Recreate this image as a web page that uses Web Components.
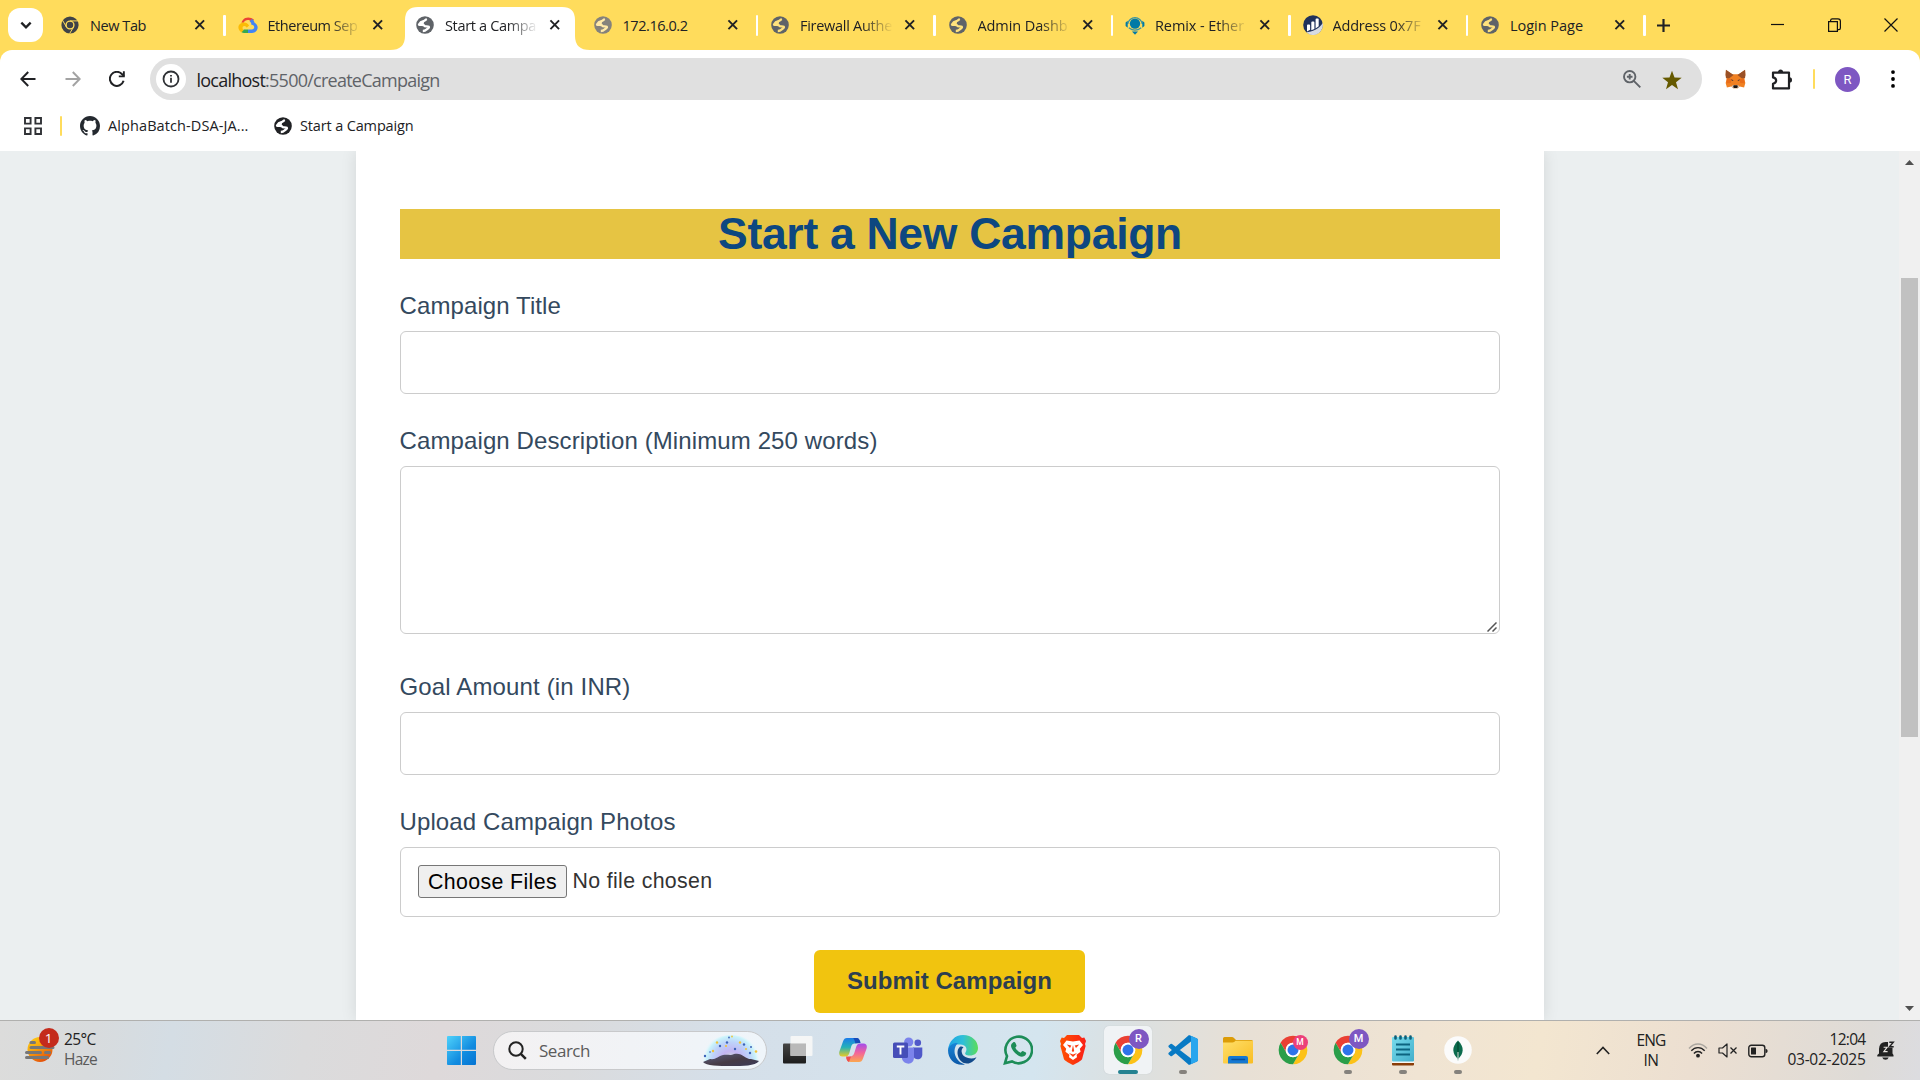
<!DOCTYPE html>
<html lang="en">
<head>
<meta charset="utf-8">
<title>Start a Campaign</title>
<style>
html,body{margin:0;width:1920px;height:1080px;overflow:hidden}
body{font-family:"Open Sans","Noto Sans",sans-serif;background:#fff}
</style>
</head>
<body>
<desktop-screen></desktop-screen>
<script>
const GLOBE = (c, l) => `<circle cx="9" cy="9" r="8.8" fill="${c}"/><path d="M10.800 3C9.600 3.600 9 5 7.400 5.200 5.200 5.600 4 6.600 3 8.600c1.600.6 4.200-.6 5.200 1 .8 1.500 3 .2 4.600 1.200.8 1.400-1.800 1.800-2.600 3-.8 1-2 1.200-3.400 1.200" fill="none" stroke="${l}" stroke-width="2.300" stroke-linejoin="round"/><path d="M3 8.600L7.400 5.200 8.200 7 6.400 9z" fill="${l}"/>`;
const CHROME = (r, y, g, b, w) => {
  const d = 'M4.950 13A22 22 0 0 1 43.050 13L24 13A11 11 0 0 0 14.470 29.500Z';
  return `<path d="${d}" fill="${r}"/><path d="${d}" fill="${y}" transform="rotate(120 24 24)"/><path d="${d}" fill="${g}" transform="rotate(240 24 24)"/><circle cx="24" cy="24" r="11.200" fill="${w}"/><circle cx="24" cy="24" r="8.400" fill="${b}"/>`;
};
const ICONS = {
  down: ['0 0 12 12', '<path d="M2 4L6 8l4-4" fill="none" stroke="#202124" stroke-width="2"/>'],
  chromeGray: ['1 1 46 46', `<circle cx="24" cy="24" r="22" fill="#3f4247"/><circle cx="24" cy="24" r="10" fill="none" stroke="#ffdc5c" stroke-width="3.500"/><path d="M24 13.500H44M15 29.500L5 12M33 29.500L23 46" stroke="#ffdc5c" stroke-width="2.500"/>`],
  cloud: ['0 0 20 17', '<path d="M14.300 4.700l1.700-1.700C12.700-.2 7.600-.3 4.900 3.100 4.200 4 3.700 5 3.500 6l2.300 0C6.500 3.500 11 1.800 13.400 5.300z" fill="#ea4335"/><path d="M16.600 6C16.100 4.300 15.200 3.100 14 2.200l-2.400 2.400c1.200.8 1.800 2.200 1.800 3.600 3.600-.1 3.800 5 .3 5.100H10V17h4c5.900-.3 7.900-7.800 2.600-11z" fill="#4285f4"/><path d="M6 17h4v-3.700H6L4 14.500 3.600 16.200C4.400 16.800 5.200 17 6 17z" fill="#34a853"/><path d="M6 5.900c-5.700 0-7.900 7-2.500 10.400l2.300-2.400C3.800 12.800 4.300 9.600 6.300 9.600c1.200 0 2 .8 2.400 1.800l2.400-2.400C9.900 7 8.200 5.900 6 5.900z" fill="#fbbc05"/>'],
  globe: ['0 0 18 18', GLOBE('#5f6368', '#fff')],
  globeTab: ['0 0 18 18', GLOBE('#5f6368', '#ffe27d')],
  globeDim: ['0 0 18 18', GLOBE('#85827c', '#ffe9a8')],
  globeDark: ['0 0 18 18', GLOBE('#202124', '#fff')],
  remix: ['0 0 20 20', '<circle cx="10" cy="8.600" r="5.200" fill="#007aa6"/><path d="M2.700 9A7.400 7.600 0 0 1 17.300 9" fill="none" stroke="#3c94a0" stroke-width="1.300"/><path d="M2.700 5.800L.6 7.500v3.600l2.100 1.600zM17.300 5.800l2.100 1.700v3.600l-2.100 1.600z" fill="#007aa6"/><path d="M3.800 12.800Q10 17.600 16.200 12.800" fill="none" stroke="#3c94a0" stroke-width="1.300"/><path d="M7 16.400h6L10 19.800z" fill="#007aa6"/>'],
  etherscan: ['0 0 20 20', '<circle cx="10" cy="10" r="9.800" fill="#21325b"/><path d="M19.900 8C16 14 9 17 3.500 17.300 7 21 13.500 21 17 17c2.500-2.500 3.200-6 2.900-9z" fill="#d7dbe2"/><path d="M4 10.500q0-.9.9-.9h1.300q.9 0 .9.900v4.300L4 16.500zM8.300 7.400q0-.9.900-.9h1.300q.9 0 .9.900v6.600l-3.100 1.300zM12.600 4.300q0-.9.900-.9h1.300q.9 0 .9.900v7l-3.100 2.200z" fill="#fff"/>'],
  close: ['0 0 12 12', '<path d="M1.500 1.500l9 9M10.500 1.500l-9 9" stroke="#202124" stroke-width="2"/>'],
  plus: ['0 0 12 12', '<path d="M6 0v12M0 6h12" stroke="#202124" stroke-width="2"/>'],
  minimize: ['0 0 13 13', '<path d="M0 5.500h13" stroke="#111" stroke-width="1.200"/>'],
  restore: ['0 0 14 14', '<path d="M1.600 3.600h8.800v9.800H1.600zM3.600 3.200V2.500a1.700 1.700 0 0 1 1.700-1.600H11a2.400 2.400 0 0 1 2.400 2.400v6.700a1.700 1.700 0 0 1-1.600 1.700h-1" fill="none" stroke="#111" stroke-width="1.200"/>'],
  winClose: ['0 0 14 14', '<path d="M.5.5l13 13M13.500.5L.5 13.500" stroke="#111" stroke-width="1.200"/>'],
  back: ['0 0 16 16', '<path d="M15.500 8H2M8.200 1L1.300 8l6.900 7" fill="none" stroke="#202124" stroke-width="2"/>'],
  forward: ['0 0 16 16', '<path d="M.5 8H14M7.800 1l6.900 7-6.900 7" fill="none" stroke="#a3a3a3" stroke-width="2"/>'],
  reload: ['0 0 16 16', '<path d="M14.600 9.800A7 7 0 1 1 13.200 3.300L15 5" fill="none" stroke="#202124" stroke-width="2"/><path d="M15.800.3v6h-6V4.400h4.100V.3z" fill="#202124"/>'],
  info: ['0 0 18 18', '<circle cx="9" cy="9" r="7.500" fill="none" stroke="#303236" stroke-width="1.800"/><path d="M9 7.800v5M9 4.900v1.700" stroke="#303236" stroke-width="1.800"/>'],
  zoom: ['0 0 18 18', '<circle cx="6.700" cy="6.700" r="5.700" fill="none" stroke="#5f6368" stroke-width="1.900"/><path d="M10.800 10.800l6.500 6.500M6.700 3.900v5.600M3.900 6.700h5.600" stroke="#5f6368" stroke-width="1.900"/>'],
  star: ['0 0 20 20', '<path d="M10 .8l2.500 6.700 7.200.3-5.700 4.400 2 7L10 15.100l-6 4.100 2-7L.300 7.800l7.200-.3z" fill="#665a00"/>'],
  fox: ['0 0 22 20', '<path d="M1 1l6.500 4.200h7L21 1l.3 5-1 4 1 4-1.300 4.500-4.500-1-2 1.800h-5l-2-1.800-4.500 1L.7 14l1-4-1-4z" fill="#f08022"/><path d="M1 .8l8 5.300L4.200 9.500 1 9 .6 6zM21 .8l-8 5.300 4.800 3.400 3.200-.5.400-3z" fill="#9a5026"/><path d="M2 9.500l5 .5-1 4-4.500.2zM20 9.500l-5 .5 1 4 4.500.2z" fill="#e96c18"/><path d="M6.500 10l2.600 1.500-1.800.6zM15.500 10l-2.600 1.500 1.800.6z" fill="#5b3c32"/><path d="M6.500 17.200L9 16h4l2.500 1.200-2.300 2.300H8.800z" fill="#d8c5b4"/><path d="M9 16.200h4l.4 2-1 .8H9.600l-1-.8z" fill="#1c1512"/>'],
  puzzle: ['0 0 21 21', '<path d="M2 3.600h16v15.800H2v-4.600c4.200-1 4.200-5.400 0-6.400z" fill="none" stroke="#202124" stroke-width="2.200" stroke-linejoin="round"/><path d="M6.900 3.200a2.600 2.600 0 0 1 5.200 0zM18.500 8.300a2.500 2.600 0 0 1 0 5.200z" fill="#202124"/>'],
  dots: ['0 0 4 18', '<circle cx="2" cy="2.100" r="1.900"/><circle cx="2" cy="9" r="1.900"/><circle cx="2" cy="15.900" r="1.900"/>'],
  apps: ['0 0 18 18', '<path d="M1 1h5.600v5.600H1zM11.400 1H17v5.600h-5.600zM1 11.400h5.600V17H1zM11.400 11.400H17V17h-5.600z" fill="none" stroke="#303236" stroke-width="1.900"/>'],
  github: ['0 0 16 16', '<path fill="#24292f" d="M8 0C3.580 0 0 3.580 0 8c0 3.540 2.290 6.530 5.470 7.590.4.070.55-.17.55-.38 0-.19-.01-.82-.01-1.490-2.010.37-2.530-.49-2.690-.94-.09-.23-.48-.94-.82-1.130-.28-.15-.68-.52-.01-.53.63-.01 1.080.58 1.230.82.720 1.210 1.870.87 2.330.66.070-.52.28-.87.51-1.070-1.780-.2-3.640-.89-3.640-3.950 0-.87.31-1.590.82-2.150-.08-.2-.36-1.020.08-2.120 0 0 .67-.21 2.200.82.640-.18 1.320-.27 2-.27s1.360.09 2 .27c1.530-1.040 2.200-.82 2.200-.82.440 1.100.16 1.920.08 2.120.51.56.82 1.270.82 2.150 0 3.070-1.870 3.750-3.650 3.950.29.25.54.73.54 1.480 0 1.070-.01 1.930-.01 2.200 0 .21.15.46.55.38A8.010 8.010 0 0 0 16 8c0-4.420-3.580-8-8-8z"/>'],
  haze: ['0 0 30 27', '<defs><linearGradient id="h" x1="0" y1="0" x2=".6" y2="1"><stop offset="0" stop-color="#fcd21b"/><stop offset=".45" stop-color="#f9a80c"/><stop offset="1" stop-color="#e4500a"/></linearGradient></defs><circle cx="15" cy="13.500" r="12.500" fill="url(#h)"/><path d="M6 6.500h3.500M6 11.500h22M1.500 16.500h14M20.500 16.500h4M1.500 21.500h21" stroke="#777" stroke-width="3" stroke-linecap="round"/>'],
  start: ['0 0 29 29', '<defs><linearGradient id="w" x1="0" y1="0" x2="1" y2="1"><stop offset="0" stop-color="#4fd2fb"/><stop offset=".6" stop-color="#128ce0"/><stop offset="1" stop-color="#0573d2"/></linearGradient></defs><path d="M0 1q0-1 1-1h12.800v13.800H0zM15 0h13q1 0 1 1v12.800H15zM0 15h13.800v14H1q-1 0-1-1zM15 15h14v13q0 1-1 1H15z" fill="url(#w)"/>'],
  search: ['0 0 19 19', '<circle cx="8" cy="8" r="6.700" fill="none" stroke="#222" stroke-width="2"/><path d="M12.800 12.800l5 5" stroke="#222" stroke-width="2.500"/>'],
  dome: ['0 0 60 32', '<defs><radialGradient id="d" gradientUnits="userSpaceOnUse" cx="30" cy="26" r="29"><stop offset="0" stop-color="#d4e9cf"/><stop offset=".35" stop-color="#c3b5f2"/><stop offset=".65" stop-color="#bdd3fa"/><stop offset=".85" stop-color="#c8f2fa"/><stop offset="1" stop-color="#eefaff" stop-opacity="0"/></radialGradient><linearGradient id="m" x1="0" y1="0" x2="1" y2="1"><stop offset="0" stop-color="#5d6283"/><stop offset=".55" stop-color="#463b45"/><stop offset="1" stop-color="#3b3a58"/></linearGradient></defs><path d="M1 28C1 10 14 0 30 0s29 10 29 28z" fill="url(#d)"/><path d="M2 27l7-3c6 1 8-3 13-4 5-1 7 1 11-1 8-2 11 5 17 5l8 2c-4 5-16 5-28 5S5 31 2 27z" fill="url(#m)"/><g fill="#3c62b8"><circle cx="4" cy="21" r="1.200"/><circle cx="19" cy="11" r="1.200"/><circle cx="26" cy="7.500" r="1.200"/><circle cx="34" cy="14" r="1.200"/><circle cx="43" cy="9.500" r="1.200"/><circle cx="49" cy="18" r="1.200"/><circle cx="50" cy="12" r="1"/><circle cx="28" cy="2.500" r=".9"/><circle cx="9" cy="17" r=".8"/></g><g fill="#f0c23a"><circle cx="12" cy="16" r="1.200"/><circle cx="16" cy="7.500" r="1.200"/><circle cx="25" cy="11" r="1.100"/><circle cx="39" cy="7.500" r="1.200"/><circle cx="31" cy="1.500" r=".9"/><circle cx="55" cy="16.500" r="1.300"/><circle cx="45" cy="14" r="1"/></g>'],
  taskview: ['0 0 30 28', '<defs><linearGradient id="t" x1="0" y1="0" x2="0" y2="1"><stop offset="0" stop-color="#454545"/><stop offset="1" stop-color="#1d1d1d"/></linearGradient></defs><rect y="7.500" width="23" height="20" rx="1" fill="url(#t)"/><rect x="7.500" y="0" width="22" height="20" rx="1" fill="#f7f7f7" opacity=".94"/><path d="M7.500 7.500H23V20H7.500z" fill="#b9b9b9"/>'],
  copilot: ['0 0 28 26', '<defs><linearGradient id="a" x1="0" y1="0" x2="0" y2="1"><stop offset="0" stop-color="#1b7bea"/><stop offset=".5" stop-color="#24b1b8"/><stop offset="1" stop-color="#e8cb25"/></linearGradient><linearGradient id="b" x1="0" y1="0" x2="0" y2="1"><stop offset="0" stop-color="#a34cec"/><stop offset=".5" stop-color="#f2649b"/><stop offset="1" stop-color="#fba74e"/></linearGradient></defs><path d="M8 1h9c2.500 0 3.200 2 3.800 4l-5 1.500c-2 0-3 1-3.600 3l-2 7c-.8 2-1.700 3-4 3H3.500C.500 19.500-.3 17 .4 14.500L4 4.500C4.800 2 6 1 8 1z" fill="url(#a)"/><path d="M14 1h4c2 0 3 2 3.600 5l-5.200.5C15.500 3 15 1.500 14 1z" fill="#164bb8"/><path d="M20 25H12c-2.500 0-4-1-4.800-4l4.500-1.500c2-.5 3-1.500 3.600-3.500l2-6.500c.8-2 1.700-3 4-3h3.200c3 0 3.800 2.500 3.100 5L24 21.500c-.8 2.500-2 3.500-4 3.500z" fill="url(#b)"/><path d="M7 19.500h5L10 25c-1.500-.4-2.500-2-3-5.500z" fill="#ef4d52"/>'],
  teams: ['0 0 30 27', '<circle cx="15.700" cy="5" r="4.600" fill="#7b83eb"/><circle cx="24.800" cy="5.800" r="3.300" fill="#5059c9"/><path d="M20 10.500h9.300v7c0 6-8 6.500-9.300 1z" fill="#5059c9"/><path d="M9 10.500h12V20c0 9-10 8-12 2z" fill="#7b83eb"/><rect y="5.500" width="15" height="15.500" rx="1.500" fill="#464eb8"/><path d="M3.800 9.500h7.500M7.500 9.500v8" stroke="#fff" stroke-width="1.900"/>'],
  edge: ['0 0 30 30', '<defs><linearGradient id="e" x1="0" y1=".4" x2="1" y2=".4"><stop offset="0" stop-color="#1ba3e6"/><stop offset=".5" stop-color="#2fbfd8"/><stop offset="1" stop-color="#5bdd59"/></linearGradient><linearGradient id="f" x1="0" y1="0" x2="0" y2="1"><stop offset="0" stop-color="#1785d8"/><stop offset="1" stop-color="#0c58a8"/></linearGradient></defs><path d="M0 15C1 6 7 0 15 0c9 0 15 6 15 13 0 5-4 7.500-8 7.500-4.500 0-5.500-1.500-4.500-3 2.500-4 0-8-5-8C6 9 1 12 0 15z" fill="url(#e)"/><path d="M0 15C1 9.500 6 7.500 10 8c-2 1.500-3.500 5-3.500 8 0 6 4 11.500 10.500 13.500C8 31.500 0 25 0 15z" fill="url(#f)"/><path d="M12.500 11.500c-6 3.500-2.500 17.500 7 17 3-.2 7-2.500 9-6.300-5.500 2.700-13 .5-14.500-4-.8-2.500-.5-4.200 1.500-6-1-.7-2-.9-3-.7z" fill="#114a8b"/>'],
  whatsapp: ['0 0 30 30', '<path d="M2 28.200l2-7A13.300 13.300 0 1 1 9 26.400z" fill="none" stroke="#1d8d58" stroke-width="2.600"/><path d="M10 7.500c1-.8 2-.6 2.500.5l1 2.500c.2.700-.8 1.700-1.200 2.200 1.500 2.700 3.200 4.100 5.500 5 .8-.8 1.400-1.900 2.100-1.600l2.900 1.400c1.200.6-.3 4.300-3.800 4.300C14.500 21.800 8 14.500 8 10.800c0-1.600 1-2.500 2-3.300z" fill="#1d8d58"/>'],
  brave: ['0 0 26 30', '<defs><linearGradient id="r" x1="0" x2="1"><stop offset="0" stop-color="#ff5200"/><stop offset="1" stop-color="#fa1f18"/></linearGradient></defs><path d="M7 0h12l3 3 2.300-.5L26 6l-1 3 .6 2-3.500 13c-.5 1.500-6.500 5-9.100 6-2.600-1-8.600-4.500-9.100-6L.4 11 1 9 0 6l1.700-3.500L4 3z" fill="url(#r)"/><path d="M13 6.500l6.500-1L23 10l-3.200 3.800.8 3-4 3 .4 2.500L13 25l-4-2.700.4-2.500-4-3 .8-3L3 10l3.500-4.500z" fill="#fff"/><path d="M6.800 9.500l4.500.9L10 13zM19.200 9.500l-4.500.9L16 13zM13 10l1.200 6-1.200.9-1.200-.9zM9 18l4 1.600 4-1.600-4 4z" fill="#fb3b10"/>'],
  chrome: ['1 1 46 46', CHROME('#ea4033', '#fcc218', '#2a9e49', '#2f73ea', '#fff')],
  vscode: ['0 0 30 30', '<path d="M21 0l8 3.600q1 .5 1 1.600v19.600q0 1.100-1 1.600L21 30 1 12.500q-1.300-1.200 0-2.300L2.500 9q.7-.6 1.500 0L23 23.500V6.500L4 21q-.8.600-1.500 0L1 19.800q-1.300-1.100 0-2.300z" fill="#087ac4"/><path d="M21 0l8 3.600q1 .5 1 1.600v19.600q0 1.100-1 1.600L21 30c1.200.2 2-.5 2-1.800V1.800C23 .5 22.200-.2 21 0z" fill="#29a6ee"/>'],
  explorer: ['0 0 30 27', '<defs><linearGradient id="x" x1="0" y1="0" x2="1" y2="1"><stop offset="0" stop-color="#ffdf6b"/><stop offset="1" stop-color="#f9bd22"/></linearGradient></defs><path d="M0 1.500Q0 0 1.500 0H9q1 0 2 1l2 2h15.500Q30 3 30 4.500V10H0z" fill="#dc9c08"/><path d="M0 5.500h9.500q1 0 2-.7l1-1H30V25.500q0 1-1 1H1q-1 0-1-1z" fill="url(#x)"/><path d="M5 26.500V21q0-2 2-2h16q2 0 2 2v5.500z" fill="#1578d2"/><path d="M9 22.500h12.500" stroke="#0a4f9a" stroke-width="1.500" stroke-linecap="round"/>'],
  notepad: ['0 0 22 31', '<defs><linearGradient id="n" x1="0" y1="0" x2="1" y2="1"><stop offset="0" stop-color="#78dcec"/><stop offset="1" stop-color="#42aecb"/></linearGradient></defs><rect y="24" width="22" height="6.500" rx="1" fill="#8a3d08"/><rect y="22" width="22" height="6" fill="#f7f7f4"/><rect y="2" width="22" height="24.500" rx="1" fill="url(#n)"/><path d="M4 9.500h14M4 14.500h14M4 19.500h14" stroke="#0c6480" stroke-width="1.800"/><path d="M3.500 1.500v2M8.500 1.500v2M13.500 1.500v2M18.500 1.500v2" stroke="#0e5f79" stroke-width="2.600" stroke-linecap="round"/>'],
  mongo: ['0 0 28 28', '<circle cx="14" cy="14" r="13.800" fill="#fbfbfb"/><path d="M14 4.500c7 7 5.500 13.500 0 18.500-5.500-5-7-11.500 0-18.500z" fill="#0b6b4d"/><path d="M14 6v14" stroke="#03492f" stroke-width="1.200"/><path d="M14 16v8.500" stroke="#b6cfc4" stroke-width="1.200"/>'],
  chevronUp: ['0 0 14 9', '<path d="M.8 8L7 1.500 13.200 8" fill="none" stroke="#222" stroke-width="1.600"/>'],
  wifi: ['0 0 20 15', '<g fill="none" stroke-width="1.400"><path d="M1 5.500c5-6 13-6 18 0" stroke="#aaa69f"/><path d="M3.300 7.800c3.800-4.300 9.600-4.300 13.400 0M5.900 10.500c2.300-2.600 5.900-2.600 8.200 0" stroke="#222"/></g><circle cx="10" cy="12.700" r="1.900" fill="#222"/>'],
  mute: ['0 0 20 15', '<path d="M1 5h3.500L9 1v13l-4.500-4H1z" fill="none" stroke="#222" stroke-width="1.200" stroke-linejoin="round"/><path d="M12.500 4.500l6 6M18.500 4.500l-6 6" stroke="#222" stroke-width="1.300"/>'],
  battery: ['0 0 20 14' , '<rect x=".8" y="1.300" width="16" height="11.400" rx="2.500" fill="none" stroke="#222" stroke-width="1.400"/><rect x="3" y="3.500" width="5" height="7" rx=".5" fill="#222"/><path d="M17.500 4.800q2.200.3 2.200 2.200t-2.200 2.200z" fill="#222"/>'],
  bell: ['0 0 18 19', '<path d="M2 12.500V8Q2.300 1.200 8.600 1H11v5.500h4.500v6l1 1.500v1.500H.300V14zM5.200 16.500h6.500q-.9 2.200-3.200 2.200t-3.300-2.200z" fill="#222"/><path d="M6.600 6.200h3.600L6.800 10.600h3.800" fill="none" stroke="#e8e4e0" stroke-width="1.100"/><path d="M12.300 1.200h4L12.500 5.800h4.200" fill="none" stroke="#222" stroke-width="1.400"/>'],
  grip: ['0 0 10 10', '<path d="M.5 9.500l9-9M5.500 9.500l4-4" stroke="#555" stroke-width="1.500"/>'],
  triUp: ['0 0 9 5', '<path d="M4.500 0L9 5H0z" fill="#505050"/>'],
  triDown: ['0 0 9 5', '<path d="M4.500 5L9 0H0z" fill="#505050"/>']
};

const define = (name, html, setup) => customElements.define(name, class extends HTMLElement {
  connectedCallback() {
    if (this.shadowRoot) return;
    const root = this.attachShadow({ mode: 'open' });
    const t = document.createElement('template');
    t.innerHTML = typeof html === 'function' ? html(this) : html;
    root.append(t.content.cloneNode(true));
    if (setup) setup(this, root);
  }
});

define('ui-icon', el => {
  const [box, body] = ICONS[el.getAttribute('name')];
  const w = el.getAttribute('w'), h = el.getAttribute('h') || w;
  return `<style>:host{display:block;flex:none;width:${w}px;height:${h}px}svg{display:block}</style><svg width="${w}" height="${h}" viewBox="${box}" preserveAspectRatio="none">${body}</svg>`;
});

define('browser-tab', el => {
  const a = el.hasAttribute('active');
  return `<style>
  :host{display:block;flex:none;width:${el.getAttribute('width') || 177.5}px;height:50px;position:relative}
  .row{display:flex;align-items:center;height:50px;position:relative}
  .fav{width:20px;margin-left:12.500px;display:flex;justify-content:center;flex:none}
  .title{width:93px;margin-left:10px;flex:none;overflow:hidden;white-space:nowrap;font-size:14.500px;line-height:24px;height:24px;padding-top:2px;color:#202124}
  .fade{-webkit-mask-image:linear-gradient(90deg,#000 62px,transparent 93px)}
  ui-icon.x{margin-left:11px}
  .sep{width:2.500px;height:21px;border-radius:1px;background:#fff;margin-left:17.500px;flex:none}
  svg.bg{position:absolute;left:-12.500px;top:0}
  </style>
  ${a ? '<svg class="bg" width="200" height="50"><path d="M0 50Q15 50 15 36V20Q15 7 28 7H172Q185 7 185 20V36Q185 50 200 50Z" fill="#fff"/></svg>' : ''}
  <div class="row"><span class="fav"><ui-icon name="${el.getAttribute('icon')}" w="${el.getAttribute('iw') || 18}" h="${el.getAttribute('ih') || 18}"></ui-icon></span>
  <div class="title ${el.hasAttribute('short') ? '' : 'fade'}"><slot></slot></div><ui-icon class="x" name="close" w="11.500"></ui-icon>${el.hasAttribute('nosep') ? '' : '<span class="sep"></span>'}</div>`;
});

define('tab-strip', `<style>
  :host{display:flex;height:50px;background:#ffdc5c;align-items:center}
  .menu{width:35px;height:34px;border-radius:12px;background:#fff;margin-left:8px;margin-right:4.500px;display:flex;align-items:center;justify-content:center;flex:none}
  .plus{margin-left:13px}.win{margin-left:auto;display:flex;align-items:center;gap:43px;padding-right:22px}
  </style>
  <div class="menu"><ui-icon name="down" w="14"></ui-icon></div>
  <browser-tab icon="chromeGray" short><fit-text w="56">New Tab</fit-text></browser-tab>
  <browser-tab icon="cloud" iw="20" ih="16" nosep><fit-text w="90">Ethereum Sep</fit-text></browser-tab>
  <browser-tab icon="globe" active nosep><fit-text w="91">Start a Campa</fit-text></browser-tab>
  <browser-tab icon="globeDim" short><fit-text w="65">172.16.0.2</fit-text></browser-tab>
  <browser-tab icon="globeTab"><fit-text w="92">Firewall Authe</fit-text></browser-tab>
  <browser-tab icon="globeTab"><fit-text w="90">Admin Dashb</fit-text></browser-tab>
  <browser-tab icon="remix" iw="20" ih="20"><fit-text w="89">Remix - Ether</fit-text></browser-tab>
  <browser-tab icon="etherscan" iw="20" ih="20"><fit-text w="88">Address 0x7F</fit-text></browser-tab>
  <browser-tab icon="globeTab" short width="176"><fit-text w="73">Login Page</fit-text></browser-tab>
  <ui-icon class="plus" name="plus" w="13"></ui-icon>
  <div class="win"><ui-icon name="minimize" w="13"></ui-icon><ui-icon name="restore" w="14"></ui-icon><ui-icon name="winClose" w="14"></ui-icon></div>`);

define('tool-bar', `<style>
  :host{display:block;background:#ffdc5c}
  .bar{height:58px;background:#fff;border-radius:12px 12px 0 0;display:flex;align-items:center}
  .nav{display:flex;align-items:center;gap:28.500px;margin-left:20px;width:130px}
  .omni{width:1552px;height:42px;border-radius:21px;background:#e0e0e0;display:flex;align-items:center;flex:none}
  .info{width:30px;height:30px;border-radius:50%;background:#fff;margin:0 10.500px 0 6px;display:flex;align-items:center;justify-content:center}
  .url{font-size:18px;color:#5f6368;margin-top:1px}.url b{font-weight:400;color:#202124}
  .in{margin-left:auto;display:flex;gap:21px;margin-right:20px;align-items:center}
  .in ui-icon + ui-icon{margin-top:2px}
  .ext{display:flex;align-items:center;margin-left:23px}
  .sep{width:2.500px;height:20px;background:#ffdc5c;border-radius:1px;margin:0 20px 0 20.500px}
  .av{width:25px;height:25px;border-radius:50%;background:#7e57c2;color:#fff;font:13px/25px Roboto,sans-serif;text-align:center;margin-right:30.500px}
  </style><div class="bar"><div class="nav"><ui-icon name="back" w="16"></ui-icon><ui-icon name="forward" w="16"></ui-icon><ui-icon name="reload" w="16"></ui-icon></div>
  <div class="omni"><span class="info"><ui-icon name="info" w="18"></ui-icon></span><fit-text class="url" w="243"><b>localhost</b>:5500/createCampaign</fit-text><div class="in"><ui-icon name="zoom" w="18"></ui-icon><ui-icon name="star" w="20"></ui-icon></div></div>
  <div class="ext"><ui-icon name="fox" w="21" h="20"></ui-icon><ui-icon style="margin-left:25px" name="puzzle" w="21"></ui-icon><span class="sep"></span><span class="av">R</span><ui-icon name="dots" w="4" h="18"></ui-icon></div></div>`);

define('bookmark-bar', `<style>
  :host{display:flex;height:43px;background:#fff;align-items:flex-start;color:#202124;font-size:14.500px;line-height:24px;box-sizing:border-box}
  ui-icon.a{margin-left:23.500px}.sep{width:2.500px;height:20px;background:#ffdc5c;border-radius:1px;margin:0 18px 0 18px}
  .wrap{display:flex;align-items:center;height:35px}fit-text{margin-left:8px}
  </style><div class="wrap"><ui-icon class="a" name="apps" w="18"></ui-icon><span class="sep"></span><ui-icon name="github" w="20"></ui-icon><fit-text w="140.500">AlphaBatch-DSA-JA...</fit-text><ui-icon style="margin-left:25.500px" name="globeDark" w="18"></ui-icon><fit-text w="113.500">Start a Campaign</fit-text></div>`);

define('form-field', el => `<style>
  :host{display:block;margin-top:${el.getAttribute('gap') || 33}px}
  label{display:block;height:28px;line-height:28px;font-size:24px;color:#34495e;margin:0 0 11px -.5px}
  .box{height:${el.getAttribute('h')}px;box-sizing:border-box;border:1px solid #ccc;border-radius:6px;background:#fff;position:relative}
  .grip{position:absolute;right:2px;bottom:1px}
  </style><label><fit-text w="${el.getAttribute('lw')}">${el.getAttribute('label')}</fit-text></label><div class="box"><slot></slot>${el.hasAttribute('grip') ? '<ui-icon class="grip" name="grip" w="10"></ui-icon>' : ''}</div>`);

define('campaign-form', `<style>
  :host{display:block;width:1100px;padding:58px 44px 0;background:#fff;box-shadow:0 0 15px rgba(0,0,0,.1);font-family:"Liberation Sans",Arial,sans-serif}
  h1{margin:0;height:50px;line-height:50px;text-align:center;background:#e6c443;color:#0d4780;font-size:44.500px}
  .file{display:flex;align-items:flex-start;padding:17px 17px}
  .btn{box-sizing:border-box;width:149px;height:33px;border:1px solid #767676;border-radius:3px;background:#efefef;color:#000;font-size:21.330px;line-height:32px;text-align:center}
  .none{font-size:21.330px;line-height:32px;color:#333;margin-left:5.500px}
  .submit{width:271px;height:63px;border-radius:6px;background:#f1c40f;color:#2c3e50;font-weight:700;font-size:24px;line-height:62px;text-align:center;margin:33px 0 0 414px}
  </style><h1><fit-text w="464">Start a New Campaign</fit-text></h1>
  <form-field label="Campaign Title" lw="161.500" h="63"></form-field>
  <form-field label="Campaign Description (Minimum 250 words)" lw="478" h="168" grip></form-field>
  <form-field label="Goal Amount (in INR)" lw="231" h="63" gap="39"></form-field>
  <form-field label="Upload Campaign Photos" lw="276" h="70"><div class="file"><div class="btn"><fit-text w="129">Choose Files</fit-text></div><fit-text class="none" w="140">No file chosen</fit-text></div></form-field>
  <div class="submit"><fit-text w="205">Submit Campaign</fit-text></div>`);

define('page-view', `<style>
  :host{display:flex;height:869px;background:#ebeff0;overflow:hidden}
  .content{flex:1;padding-left:356px}
  .scroll{width:21px;background:#f0f0f0;display:flex;flex-direction:column;align-items:center}
  .thumb{width:17px;height:459px;background:#c1c1c1;margin-top:113px}
  </style><div class="content"><campaign-form style="height:811px"></campaign-form></div>
  <div class="scroll"><ui-icon style="margin-top:9px" name="triUp" w="9" h="5"></ui-icon><div class="thumb"></div><ui-icon style="margin-top:auto;margin-bottom:9px" name="triDown" w="9" h="5"></ui-icon></div>`);

define('task-app', el => `<style>
  :host{display:flex;width:55px;height:59px;flex:none;align-items:center;justify-content:center;position:relative}
  .tile{width:48px;height:48px;border-radius:5px;display:flex;align-items:center;justify-content:center;position:relative;top:-.5px;${el.hasAttribute('active') ? 'background:#f0f3f5;box-shadow:0 0 1px #b5bcc0' : ''}}
  .run{position:absolute;left:50%;transform:translateX(-50%);bottom:0;height:4px;border-radius:2px;width:${el.hasAttribute('active') ? 20 : 8}px;background:${el.hasAttribute('active') ? '#248291' : '#85827d'}}
  .badge{position:absolute;border-radius:50%;color:#fff;text-align:center;font-family:Roboto,sans-serif;font-weight:500;${el.getAttribute('big') ? 'width:20px;height:20px;right:3px;top:3px;font-size:11px;line-height:20px' : 'width:15px;height:15px;right:9px;top:9px;font-size:8.500px;line-height:15px'};background:${el.getAttribute('color')}}
  </style><div class="tile"><ui-icon name="${el.getAttribute('icon')}" w="${el.getAttribute('iw') || 30}" h="${el.getAttribute('ih') || 30}"></ui-icon>${el.hasAttribute('color') ? '<span class="badge"><slot></slot></span>' : ''}${el.hasAttribute('run') ? '<span class="run"></span>' : ''}</div>`);

define('task-bar', `<style>
  :host{display:flex;box-sizing:border-box;height:60px;border-top:1px solid #b0b0ae;align-items:center;background:linear-gradient(100deg,#dcdcdb 0,#d8dbdd 5%,#d4dde4 9%,#dbdbdc 16%,#ded9da 23%,#dadbdd 30%,#d5dfe9 38%,#d4e5ef 54%,#dce0e0 59%,#e8e0d5 65%,#f0e4d3 74%,#f3e6d0 80%,#ecdfd1 88%,#dedbd7 97%,#dcdce0);color:#222;font-size:16px}
  .weather{display:flex;width:434px;padding-left:25px;box-sizing:border-box;position:relative;align-items:center;flex:none}
  .weather ui-icon{margin-top:-3px}
  .num{position:absolute;left:38.500px;top:-4px;width:20px;height:20px;border-radius:50%;background:#c42b1c;color:#fff;font-size:13.500px;line-height:20px;text-align:center}
  .w{margin:-3px 0 0 9px;line-height:20px;font-size:15.500px}.w div+div{color:#5a5a5a}
  .w div,.c div{height:20px}
  .find{display:flex;box-sizing:border-box;width:274px;height:39px;border-radius:20px;background:linear-gradient(90deg,#f3f1f2,#eff5fa);border:1px solid #c8c9cb;align-items:center;margin:-1px 3px 0 4px;padding-left:13.500px;flex:none;font-size:17px;color:#5b5b5b}
  .find fit-text{margin-left:12.500px}.find ui-icon.d{margin:1px 5.500px 0 auto}
  .tray{display:flex;align-items:center;margin-left:auto;padding-right:25.500px}
  .c{line-height:20px;font-size:15.500px;text-align:center;margin-top:-1px}.c.r{text-align:right;margin-top:-3px}
  </style>
  <div class="weather"><ui-icon name="haze" w="30" h="27"></ui-icon><span class="num">1</span><div class="w"><div><fit-text w="31.500">25°C</fit-text></div><div><fit-text w="33">Haze</fit-text></div></div></div>
  <task-app icon="start" iw="29" ih="29"></task-app>
  <div class="find"><ui-icon name="search" w="19"></ui-icon><fit-text w="51">Search</fit-text><ui-icon class="d" name="dome" w="60" h="32"></ui-icon></div>
  <task-app icon="taskview" ih="28"></task-app><task-app icon="copilot" iw="28" ih="26"></task-app><task-app icon="teams" ih="27"></task-app><task-app icon="edge"></task-app><task-app icon="whatsapp"></task-app><task-app icon="brave" iw="26"></task-app>
  <task-app icon="chrome" active run color="#7e57c2" big="1">R</task-app><task-app icon="vscode" run></task-app><task-app icon="explorer" ih="27"></task-app><task-app icon="chrome" color="#ec407a">M</task-app><task-app icon="chrome" run color="#7e57c2" big="1">M</task-app><task-app icon="notepad" iw="22" ih="31" run></task-app><task-app icon="mongo" iw="28" ih="28" run></task-app>
  <div class="tray"><ui-icon name="chevronUp" w="14" h="9"></ui-icon><div class="c" style="margin-left:26.500px"><div><fit-text w="29">ENG</fit-text></div><div><fit-text w="15">IN</fit-text></div></div>
  <ui-icon style="margin-left:22px" name="wifi" w="20" h="15"></ui-icon><ui-icon style="margin-left:10px" name="mute" w="20" h="15"></ui-icon><ui-icon style="margin-left:10px" name="battery" w="20" h="14"></ui-icon>
  <div class="c r" style="margin-left:20px"><div><fit-text w="36">12:04</fit-text></div><div><fit-text w="78">03-02-2025</fit-text></div></div><ui-icon style="margin-left:11px" name="bell" w="18" h="19"></ui-icon></div>`);

define('desktop-screen', `<style>:host{display:flex;flex-direction:column;width:1920px;height:1080px}</style>
  <tab-strip></tab-strip><tool-bar></tool-bar><bookmark-bar></bookmark-bar><page-view></page-view><task-bar></task-bar>`);

/* Spaces its letters so that the run of text takes up the width in "w". */
define('fit-text', '<style>:host{display:inline-block;white-space:nowrap}span{display:inline-block}</style><span><slot></slot></span>', (el, root) => {
  const want = +el.getAttribute('w'), n = el.textContent.length;
  const now = root.querySelector('span').getBoundingClientRect().width;
  el.style.letterSpacing = ((want - now) / n).toFixed(3) + 'px';
});
</script>
</body>
</html>
